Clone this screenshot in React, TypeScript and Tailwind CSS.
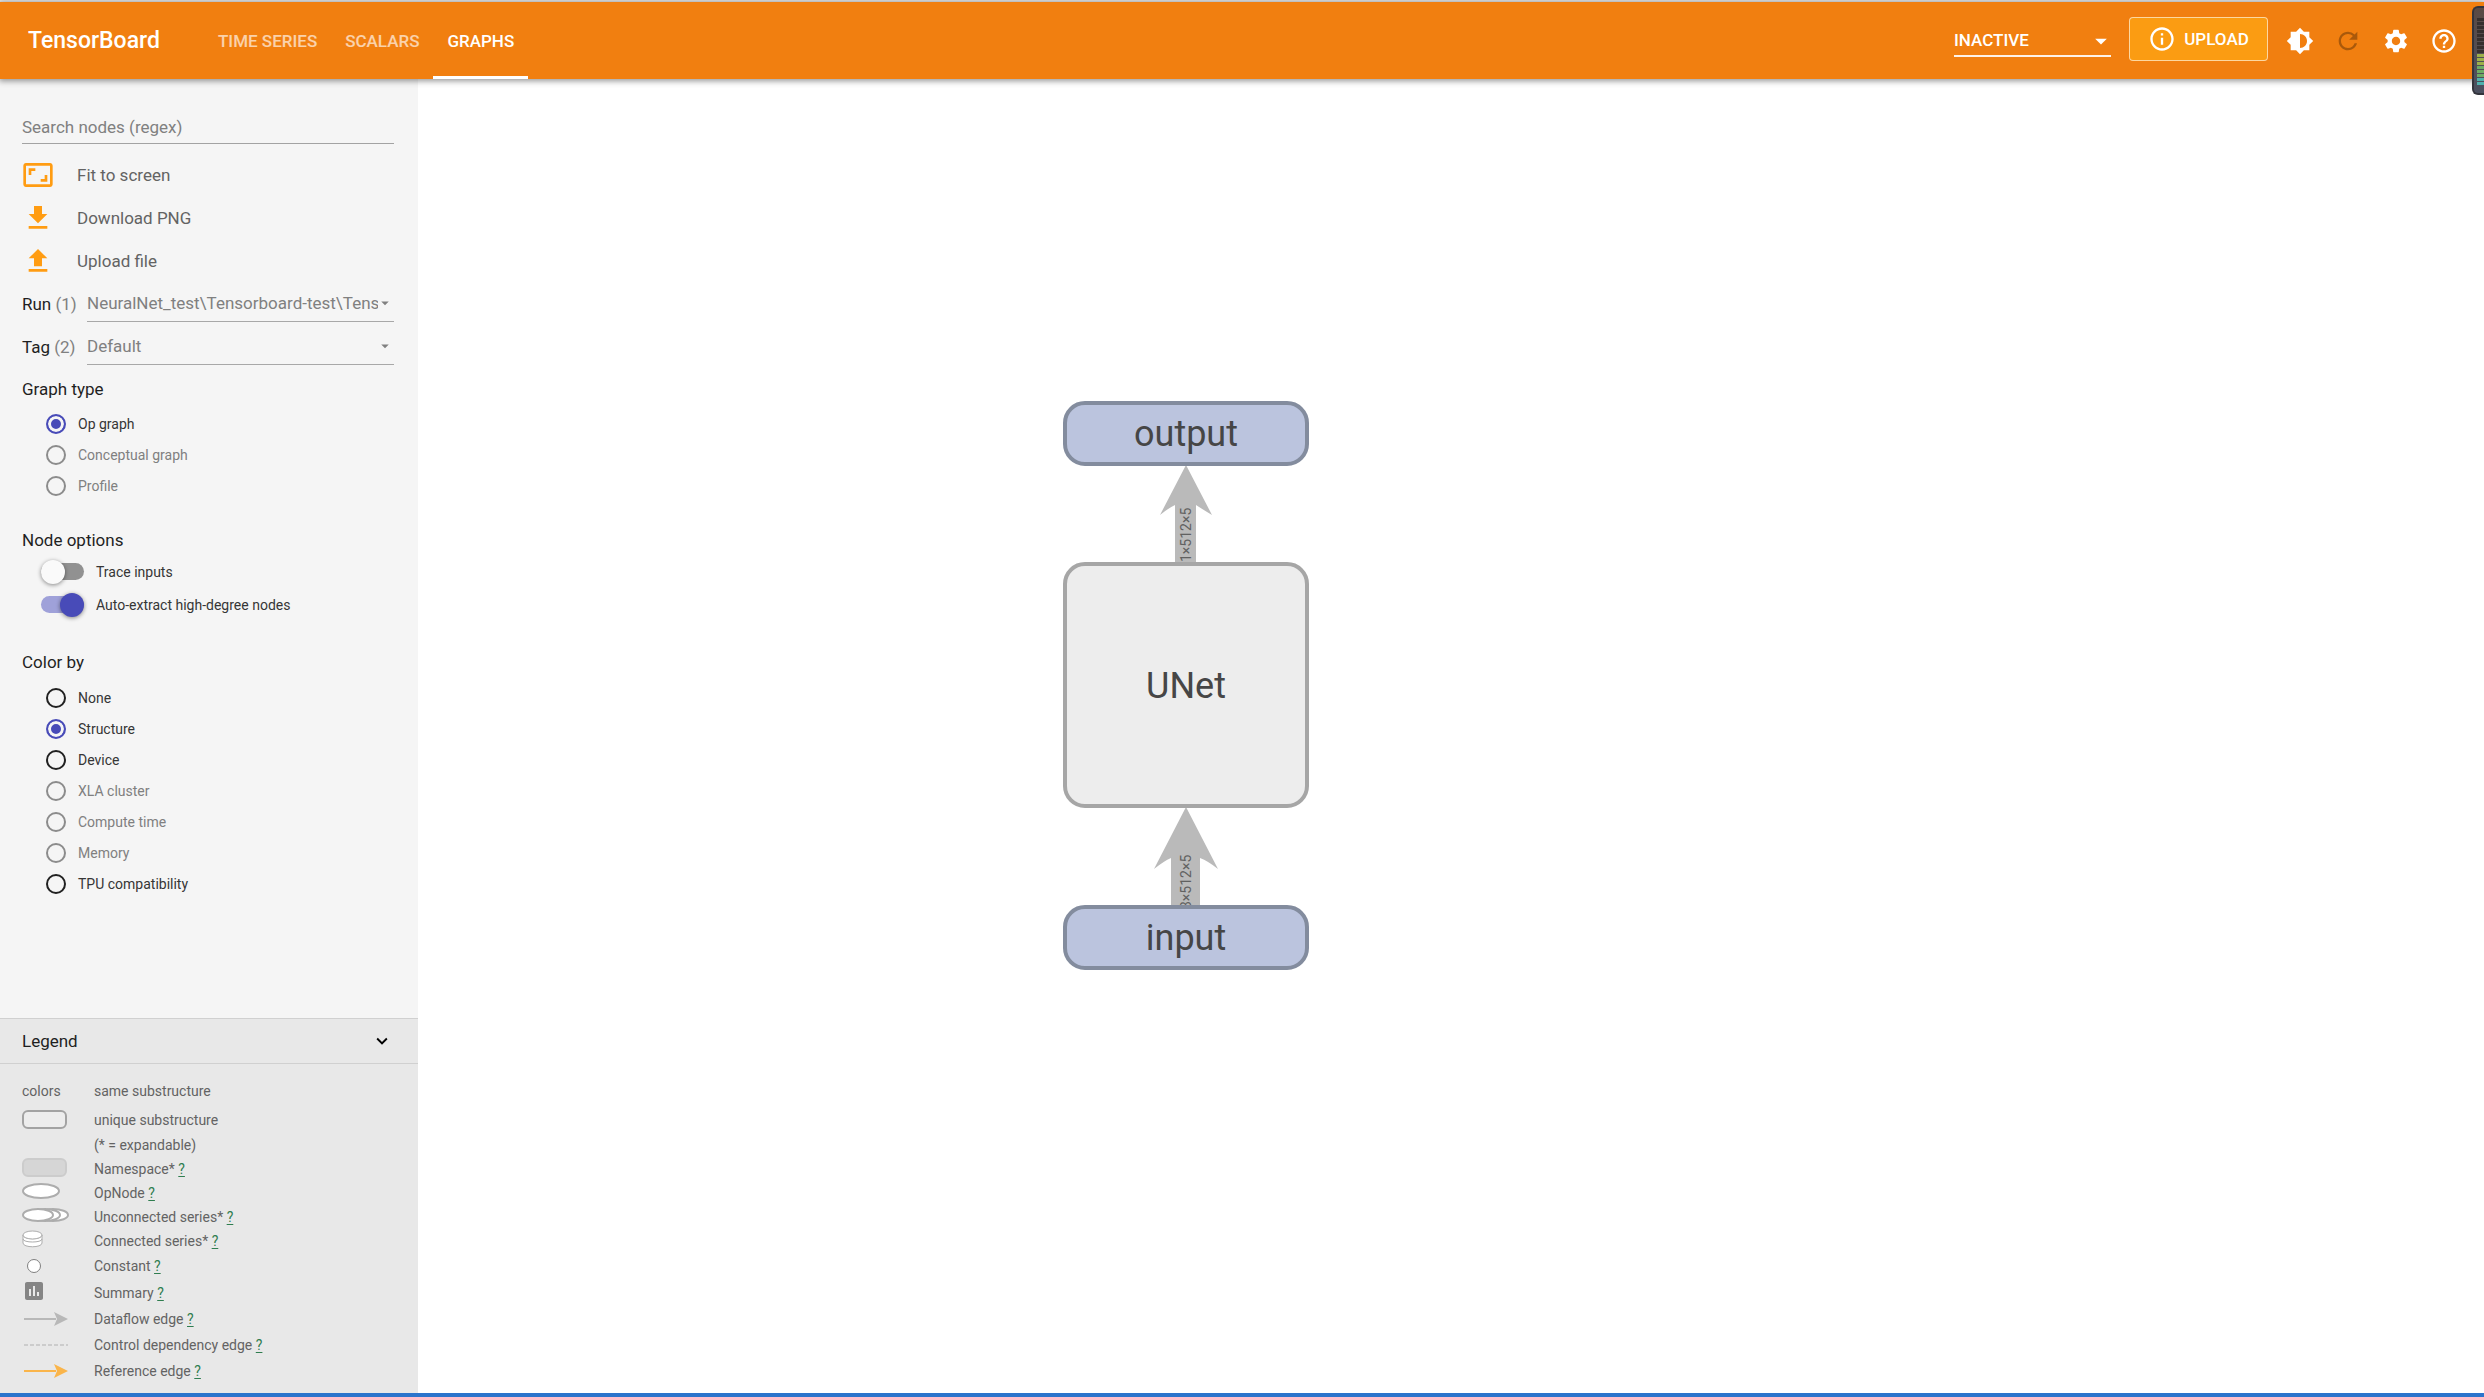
import React from "react";
import { MdInfoOutline, MdSettings, MdHelpOutline, MdRefresh, MdBrightness6, MdAspectRatio, MdFileDownload, MdFileUpload, MdAssessment, MdExpandMore, MdArrowDropDown } from "react-icons/md";

const tabs = ["TIME SERIES", "SCALARS", "GRAPHS"];

function Header() {
  return (
    <header className="relative z-10 flex h-[77px] shrink-0 items-center bg-[#f17f10] pl-7 pr-[26px] text-white shadow-[0_1px_6px_1px_rgba(0,0,0,0.42)]">
      <h1 className="w-[176px] text-[23px] font-medium">TensorBoard</h1>
      <nav className="flex h-full">
        {tabs.map((t) => (
          <a
            key={t}
            href="#"
            className={
              "flex h-full items-center border-y-3 border-t-transparent px-[14px] text-[17px] font-medium " +
              (t === "GRAPHS" ? "border-b-white" : "border-b-transparent text-white/65")
            }
          >
            {t}
          </a>
        ))}
      </nav>
      <div className="ml-auto flex items-center">
        <div className="relative mr-[18px] w-[157px]">
          <select aria-label="Reload mode" className="block h-8 w-full appearance-none border-b-2 border-white/90 text-[17px] font-medium">
            <option>INACTIVE</option>
          </select>
          <MdArrowDropDown className="pointer-events-none absolute -right-1 top-0.5 size-7" />
        </div>
        <button className="mb-[3px] mr-[18px] flex h-11 w-[139px] items-center justify-center gap-2 rounded-[4px] border border-white/60 bg-[#fb9c12] text-[17px] font-medium">
          <MdInfoOutline className="size-7" />
          UPLOAD
        </button>
        <div className="flex items-center gap-5">
          <button aria-label="Theme"><MdBrightness6 className="size-7" /></button>
          <button aria-label="Reload" disabled className="text-[#a9590b]"><MdRefresh className="size-7" /></button>
          <button aria-label="Settings"><MdSettings className="size-7" /></button>
          <button aria-label="Help"><MdHelpOutline className="size-7" /></button>
        </div>
      </div>
    </header>
  );
}

function LevelMeter() {
  return (
    <div className="absolute right-0 top-[4px] z-20 flex h-[89px] w-3 flex-col justify-end gap-px rounded-l-md border-2 border-r-0 border-[#33343c] bg-linear-to-b from-[#5a4a44] to-[#4b5060] py-2 pl-[3px]">
      {Array.from({ length: 17 }, (_, i) => (
        <span key={i} className={"h-[3px] w-full " + (i < 9 ? "bg-[#36302f]" : i < 12 ? "bg-[#9db04a]" : i < 15 ? "bg-[#6cab64]" : "bg-[#4fb0ad]")} />
      ))}
    </div>
  );
}

function Action({ icon, label }: { icon: React.ReactNode; label: string }) {
  return (
    <button className="flex h-[43px] items-center text-left text-[17px] text-[#636363]">
      <span className="flex w-[55px] text-[#ff9c12]">{icon}</span>
      {label}
    </button>
  );
}

function Picker({ id, label, count, value }: { id: string; label: string; count: number; value: string }) {
  return (
    <div className="flex h-[43px] items-center text-[17px]">
      <label htmlFor={id} className="w-[65px] text-[#1f1f1f]">
        {label} <span className="text-[#808080]">({count})</span>
      </label>
      <div className="relative flex-1">
        <select id={id} className="h-9 w-full appearance-none border-b border-[#a8a8a8] pr-4 text-[#808080]">
          <option>{value}</option>
        </select>
        <MdArrowDropDown className="pointer-events-none absolute right-0 top-2 size-[18px] text-[#808080]" />
      </div>
    </div>
  );
}

function Radio({ name, label, checked, disabled }: { name: string; label: string; checked?: boolean; disabled?: boolean }) {
  return (
    <label className={"flex h-[31px] items-center gap-3 text-[14px] " + (disabled ? "text-[#808080]" : "text-[#363636]")}>
      <input
        type="radio"
        name={name}
        defaultChecked={checked}
        disabled={disabled}
        className="size-5 appearance-none rounded-full border-2 border-[#212121] checked:border-[#484bb8] checked:bg-[#484bb8] checked:shadow-[inset_0_0_0_3px_#f5f5f5] disabled:border-[#8c8c8c]"
      />
      {label}
    </label>
  );
}

function Toggle({ label, checked }: { label: string; checked?: boolean }) {
  return (
    <label className="flex h-[33px] items-center gap-3 text-[14px] text-[#363636]">
      <span className="relative flex h-6 w-[43px] items-center">
        <input
          type="checkbox"
          role="switch"
          defaultChecked={checked}
          className="peer h-[17px] w-full appearance-none rounded-full bg-[#919191] checked:bg-[#9fa1d9]"
        />
        <span className="pointer-events-none absolute left-0 size-6 rounded-full bg-[#fafafa] shadow-[0_1px_4px_rgba(0,0,0,0.45)] peer-checked:left-[19px] peer-checked:bg-[#484bb8]" />
      </span>
      {label}
    </label>
  );
}

const g = { fill: "#fff", stroke: "#adadad", strokeWidth: 2 };

function Arrow({ color }: { color: string }) {
  return (
    <svg width="46" height="14" viewBox="0 0 46 14">
      <path d="M2 7H34" stroke={color} strokeWidth="2" />
      <path d="M32 0L46 7L32 14L35 7Z" fill={color} />
    </svg>
  );
}

const legend: { icon?: React.ReactNode; label: string; help?: boolean; h: string }[] = [
  { icon: "colors", label: "same substructure", h: "h-[30px]" },
  { icon: <span className="h-[19px] w-[45px] rounded-md border-2 border-[#a3a3a3] bg-[#ededed]" />, label: "unique substructure", h: "h-[27px]" },
  { label: "(* = expandable)", h: "h-6" },
  { icon: <span className="mb-1 h-[19px] w-[45px] rounded-md border-2 border-[#cccccc] bg-[#d6d6d6]" />, label: "Namespace*", help: true, h: "h-6" },
  { icon: <svg width="40" height="17" className="mb-1"><ellipse cx="19" cy="8" rx="18" ry="7" {...g} /></svg>, label: "OpNode", help: true, h: "h-6" },
  {
    icon: (
      <svg width="48" height="15" className="mb-1">
        <ellipse cx="31" cy="7" rx="15" ry="6" {...g} />
        <ellipse cx="23" cy="7" rx="15" ry="6" {...g} />
        <ellipse cx="16" cy="7" rx="15" ry="6" {...g} />
      </svg>
    ),
    label: "Unconnected series*", help: true, h: "h-6",
  },
  {
    icon: (
      <svg width="22" height="18" className="mb-1" fill="#fff" stroke="#adadad">
        <path d="M1 5V13C1 18 20 18 20 13V5Z" />
        <path d="M1 9C1 13 20 13 20 9M1 5C1 10 20 10 20 5" fill="none" />
        <ellipse cx="10.5" cy="5" rx="9.5" ry="4" />
      </svg>
    ),
    label: "Connected series*", help: true, h: "h-6",
  },
  { icon: <span className="ml-[5px] size-[14px] rounded-full border border-[#808080] bg-white" />, label: "Constant", help: true, h: "h-[26px]" },
  { icon: <MdAssessment className="mb-1 size-6 text-[#858585]" />, label: "Summary", help: true, h: "h-[27px]" },
  { icon: <Arrow color="#b8b8b8" />, label: "Dataflow edge", help: true, h: "h-[26px]" },
  { icon: <svg width="46" height="2"><path d="M2 1H46" stroke="#b0b0b0" strokeWidth="1" strokeDasharray="4 2" /></svg>, label: "Control dependency edge", help: true, h: "h-[26px]" },
  { icon: <Arrow color="#fab54b" />, label: "Reference edge", help: true, h: "h-[26px]" },
];

function Sidebar() {
  return (
    <aside className="flex w-[418px] shrink-0 flex-col bg-[#f5f5f5]">
      <div className="flex flex-col pl-[22px] pr-6 pt-[31px]">
        <input aria-label="Search nodes (regex)" placeholder="Search nodes (regex)" className="mb-[9px] h-[34px] border-b border-[#a3a3a3] text-[17px] placeholder:text-[#808080]" />
        <Action icon={<MdAspectRatio className="size-8" />} label="Fit to screen" />
        <Action icon={<MdFileDownload className="size-8" />} label="Download PNG" />
        <Action icon={<MdFileUpload className="size-8" />} label="Upload file" />
        <Picker id="run" label="Run" count={1} value="NeuralNet_test\Tensorboard-test\Tens" />
        <Picker id="tag" label="Tag" count={2} value="Default" />
        <fieldset className="flex flex-col">
          <legend className="h-10 pt-[9px] text-[17px] text-[#1f1f1f]">Graph type</legend>
          <div className="pl-6">
            <Radio name="type" label="Op graph" checked />
            <Radio name="type" label="Conceptual graph" disabled />
            <Radio name="type" label="Profile" disabled />
          </div>
        </fieldset>
        <fieldset className="mt-[27px]">
          <legend className="pb-[3px] text-[17px] text-[#1f1f1f]">Node options</legend>
          <div className="pl-[19px]">
            <Toggle label="Trace inputs" />
            <Toggle label="Auto-extract high-degree nodes" checked />
          </div>
        </fieldset>
        <fieldset className="mt-[29px]">
          <legend className="pb-2 text-[17px] text-[#1f1f1f]">Color by</legend>
          <div className="pl-6">
            <Radio name="color" label="None" />
            <Radio name="color" label="Structure" checked />
            <Radio name="color" label="Device" />
            <Radio name="color" label="XLA cluster" disabled />
            <Radio name="color" label="Compute time" disabled />
            <Radio name="color" label="Memory" disabled />
            <Radio name="color" label="TPU compatibility" />
          </div>
        </fieldset>
      </div>
      <section className="mt-auto bg-[#e8e8e8]">
        <button className="flex h-[46px] w-full items-center justify-between border-y border-[#d0d0d0] pl-[22px] pr-[25px] text-[17px] text-[#1f1f1f]">
          Legend
          <MdExpandMore className="size-[22px] text-black" />
        </button>
        <ul className="px-[22px] pb-[9px] pt-3 text-[14px] text-[#636363]">
          {legend.map((r) => (
            <li key={r.label} className={"flex items-center " + r.h}>
              <span className="flex w-[72px] items-center">{r.icon}</span>
              <span>
                {r.label}{" "}
                {r.help && <a href="#" className="text-[#2f7d4f] underline underline-offset-2">?</a>}
              </span>
            </li>
          ))}
        </ul>
      </section>
    </aside>
  );
}

function Graph() {
  return (
    <main className="relative flex-1 bg-white">
      <svg role="img" aria-label="Model graph" className="absolute left-[640px] top-[320px]" width="256" height="580" fontFamily="Roboto">
        <g fill="#bababa">
          <path d="M128 66L154 116Q144 110 138 106V166H117V106Q112 108 102 116Z" />
          <path d="M128 408L160 470Q150 462 142 459V510H113V459Q106 462 96 470Z" />
        </g>
        <g fontSize="14" fill="#616161">
          <text transform="translate(133 163) rotate(-90)">1×512×5</text>
          <text transform="translate(133 510) rotate(-90)">3×512×5</text>
        </g>
        <g strokeWidth="4">
          <rect x="7" y="4" width="242" height="61" rx="20" fill="#bbc4de" stroke="#838c9e" />
          <rect x="7" y="165" width="242" height="242" rx="20" fill="#ededed" stroke="#a6a6a6" />
          <rect x="7" y="508" width="242" height="61" rx="20" fill="#bbc4de" stroke="#838c9e" />
        </g>
        <g fontSize="36" fill="#464646" textAnchor="middle">
          <text x="128" y="47">output</text>
          <text x="128" y="299">UNet</text>
          <text x="128" y="551">input</text>
        </g>
      </svg>
    </main>
  );
}

export default function App() {
  return (
    <div className="relative flex min-h-screen flex-col border-t-2 border-b-4 border-t-[#ececec] border-b-[#2b74cc] font-[Roboto,sans-serif] leading-6">
      <Header />
      <div className="flex flex-1">
        <Sidebar />
        <Graph />
      </div>
      <LevelMeter />
    </div>
  );
}
